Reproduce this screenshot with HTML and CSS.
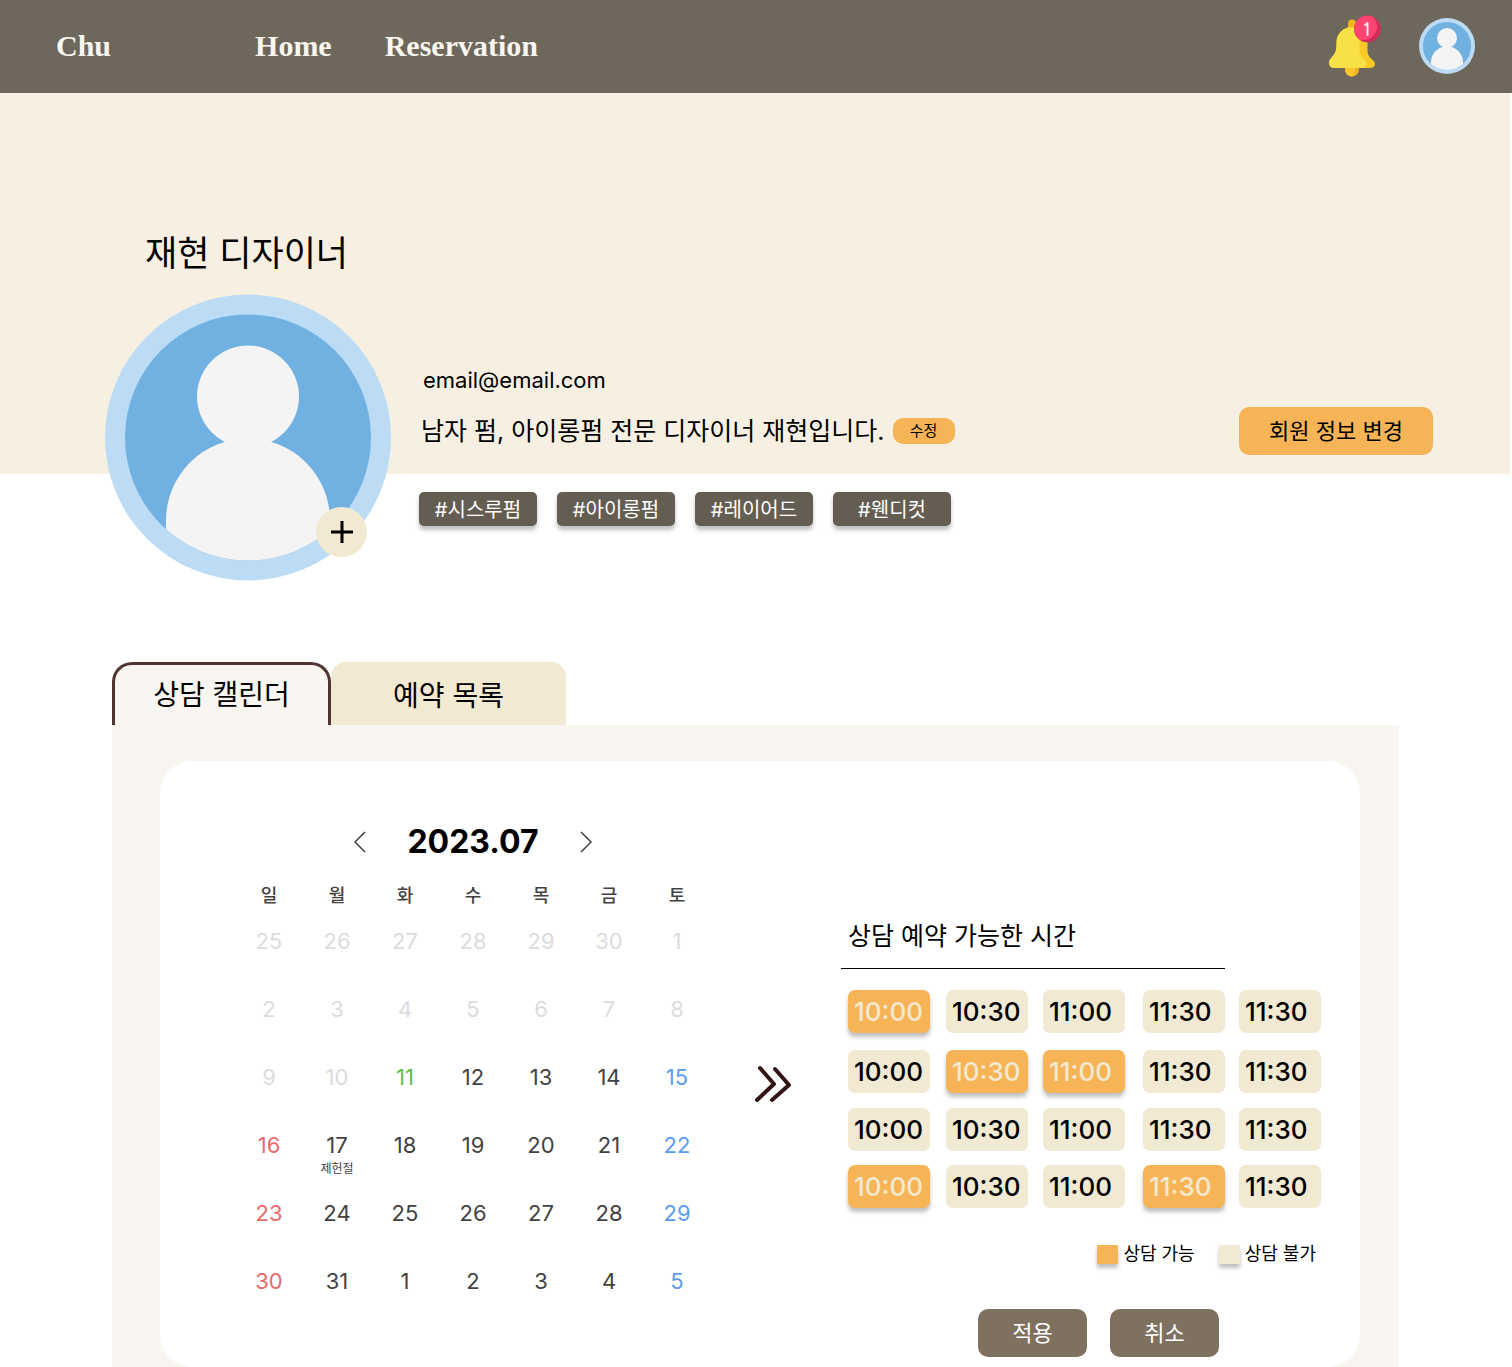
FILE: index.html
```html
<!DOCTYPE html>
<html lang="ko">
<head>
<meta charset="utf-8">
<meta name="viewport" content="width=device-width, initial-scale=1">
<title>Chu</title>
<link rel="stylesheet" href="styles.css">
</head>
<body>
<svg class="defs" aria-hidden="true">
  <defs>
    <clipPath id="face"><circle cx="143" cy="143" r="123"/></clipPath>
    <clipPath id="badge"><circle cx="39.500" cy="14" r="13.500"/></clipPath>
    <symbol id="avatar" viewBox="0 0 286 286">
      <circle cx="143" cy="143" r="143" fill="#bbdcf4"/>
      <circle cx="143" cy="143" r="123" fill="#70b1e2"/>
      <g clip-path="url(#face)" fill="#f4f4f4">
        <circle cx="143" cy="102" r="51"/>
        <path d="M61 286V226a82 82 0 0 1 164 0V286z"/>
      </g>
    </symbol>
  </defs>
</svg>

<header class="topbar">
  <a class="logo" href="#">Chu</a>
  <nav class="menu">
    <a href="#">Home</a>
    <a href="#">Reservation</a>
  </nav>
  <div class="account">
    <button class="icon-button" type="button" aria-label="알림">
      <svg class="bell" viewBox="0 0 54 62">
        <path d="M20 14V8.500a4 4 0 0 1 8 0V14z" fill="#f4b41f"/>
        <path d="M17 51h14v3.500a7 7 0 0 1-14 0z" fill="#f4b01e"/>
        <path d="M17 51h10v5q-1 4-3 5.500a7 7 0 0 1-7-7z" fill="#fbc62c"/>
        <path d="M24 12a15.500 15.500 0 0 1 15.500 15.500V36q0 4.500 4 8 3.500 3 3.500 4.500 0 4.500-5.500 4.500H7q-6 0-6-5.500 0-2.500 3-5.500 4.500-4.500 4.500-11V27.500A15.500 15.500 0 0 1 24 12z" fill="#f9c928"/>
        <path d="M24 12q7.500 3.500 7.500 15v9q0 4 3.500 7t3.500 5.500q0 4.500-5 4.500H7q-6 0-6-5.500 0-2.500 3-5.500 4.500-4.500 4.500-11V27.500A15.500 15.500 0 0 1 24 12z" fill="#f8e146"/>
        <g clip-path="url(#badge)">
          <circle cx="39.500" cy="14" r="13.500" fill="#cf2b5b"/>
          <circle cx="35.500" cy="11.500" r="13.500" fill="#ff4470"/>
        </g>
        <path d="M37 10l2.500-2v12" fill="none" stroke="#f4e8f0" stroke-width="2" stroke-linecap="round" stroke-linejoin="round"/>
      </svg>
    </button>
    <button class="icon-button" type="button" aria-label="내 계정">
      <svg class="account-avatar"><use href="#avatar"/></svg>
    </button>
  </div>
</header>

<main>
  <section class="profile">
    <h1 class="name">재현 디자이너</h1>
    <div class="profile-row">
      <div class="photo">
        <svg class="photo-image"><use href="#avatar"/></svg>
        <button class="photo-add" type="button" aria-label="사진 추가">
          <svg viewBox="0 0 24 24"><path d="M12 1v22M1 12h22" stroke="#000" stroke-width="3"/></svg>
        </button>
      </div>
      <div class="info">
        <p class="email">email@email.com</p>
        <div class="bio">
          <p>남자 펌, 아이롱펌 전문 디자이너 재현입니다.</p>
          <button class="bio-edit" type="button">수정</button>
        </div>
        <ul class="tags">
          <li>#시스루펌</li>
          <li>#아이롱펌</li>
          <li>#레이어드</li>
          <li>#웬디컷</li>
        </ul>
      </div>
      <button class="account-edit" type="button">회원 정보 변경</button>
    </div>
  </section>

  <section class="schedule">
    <div class="tabs" role="tablist">
      <button class="tab tab-active" type="button" role="tab" aria-selected="true">상담 캘린더</button>
      <button class="tab" type="button" role="tab" aria-selected="false">예약 목록</button>
    </div>
    <div class="panel" role="tabpanel">
      <div class="card">
        <div class="calendar">
          <div class="month">
            <button class="icon-button" type="button" aria-label="이전 달">
              <svg class="chevron" viewBox="0 0 14 22"><path d="M12 1L2 11l10 10"/></svg>
            </button>
            <h2>2023.07</h2>
            <button class="icon-button" type="button" aria-label="다음 달">
              <svg class="chevron" viewBox="0 0 14 22"><path d="M2 1l10 10L2 21"/></svg>
            </button>
          </div>
          <table class="days">
            <thead>
              <tr><th>일</th><th>월</th><th>화</th><th>수</th><th>목</th><th>금</th><th>토</th></tr>
            </thead>
            <tbody>
              <tr class="past"><td>25</td><td>26</td><td>27</td><td>28</td><td>29</td><td>30</td><td>1</td></tr>
              <tr class="past"><td>2</td><td>3</td><td>4</td><td>5</td><td>6</td><td>7</td><td>8</td></tr>
              <tr><td class="past-day">9</td><td class="past-day">10</td><td class="today">11</td><td>12</td><td>13</td><td>14</td><td>15</td></tr>
              <tr><td>16</td><td>17<span class="holiday">제헌절</span></td><td>18</td><td>19</td><td>20</td><td>21</td><td>22</td></tr>
              <tr><td>23</td><td>24</td><td>25</td><td>26</td><td>27</td><td>28</td><td>29</td></tr>
              <tr><td>30</td><td>31</td><td>1</td><td>2</td><td>3</td><td>4</td><td>5</td></tr>
            </tbody>
          </table>
        </div>

        <svg class="forward" viewBox="0 0 42 38" aria-hidden="true">
          <path d="M5 3l14 16L2 35M20 4l14 16L17 35"/>
        </svg>

        <div class="times">
          <h2 class="times-title">상담 예약 가능한 시간</h2>
          <div class="slots">
            <button type="button" aria-pressed="true">10:00</button>
            <button type="button" aria-pressed="false">10:30</button>
            <button type="button" aria-pressed="false">11:00</button>
            <button type="button" aria-pressed="false">11:30</button>
            <button type="button" aria-pressed="false">11:30</button>
            <button type="button" aria-pressed="false">10:00</button>
            <button type="button" aria-pressed="true">10:30</button>
            <button type="button" aria-pressed="true">11:00</button>
            <button type="button" aria-pressed="false">11:30</button>
            <button type="button" aria-pressed="false">11:30</button>
            <button type="button" aria-pressed="false">10:00</button>
            <button type="button" aria-pressed="false">10:30</button>
            <button type="button" aria-pressed="false">11:00</button>
            <button type="button" aria-pressed="false">11:30</button>
            <button type="button" aria-pressed="false">11:30</button>
            <button type="button" aria-pressed="true">10:00</button>
            <button type="button" aria-pressed="false">10:30</button>
            <button type="button" aria-pressed="false">11:00</button>
            <button type="button" aria-pressed="true">11:30</button>
            <button type="button" aria-pressed="false">11:30</button>
          </div>
          <ul class="legend">
            <li><span class="swatch swatch-open"></span>상담 가능</li>
            <li><span class="swatch"></span>상담 불가</li>
          </ul>
          <div class="actions">
            <button type="button">적용</button>
            <button type="button">취소</button>
          </div>
        </div>
      </div>
    </div>
  </section>
</main>
</body>
</html>
```
FILE: styles.css
```css
* {
  box-sizing: border-box;
}

body,
h1,
h2,
p,
ul {
  margin: 0;
  padding: 0;
}

body {
  background: #fff;
  color: #000;
  font-family: Inter, "Noto Sans CJK KR", sans-serif;
}

ul {
  list-style: none;
}

button {
  padding: 0;
  border: 0;
  color: inherit;
  font: inherit;
  cursor: pointer;
}

svg {
  display: block;
}

.defs {
  position: absolute;
  width: 0;
  height: 0;
}

.icon-button {
  background: none;
}

/* Top bar */
.topbar {
  display: flex;
  align-items: center;
  height: 93px;
  padding: 0 37px 2px 56px;
  background: #6e675b;
  font: bold 30px/40px "Liberation Serif", serif;
}

.topbar a {
  color: #faf6f1;
  text-decoration: none;
}

.menu {
  display: flex;
  gap: 53px;
  margin-left: 144px;
}

.account {
  display: flex;
  align-items: center;
  gap: 37px;
  margin-left: auto;
}

.bell {
  width: 54px;
  height: 62px;
}

.account-avatar {
  width: 56px;
  height: 56px;
}

/* Profile */
.profile {
  padding: 135px 79px 0 105px;
  background: linear-gradient(#f7f0e2, #f7f0e2) no-repeat 0 0 / calc(100% - 2px) 381px;
}

.name {
  margin: 0 0 16px 40px;
  font-size: 35px;
  font-weight: 400;
  line-height: 50px;
}

.profile-row {
  display: flex;
  align-items: flex-start;
}

.photo {
  position: relative;
  flex: none;
}

.photo-image {
  width: 286px;
  height: 287px;
}

.photo-add {
  position: absolute;
  right: 24px;
  bottom: 24px;
  display: grid;
  place-items: center;
  width: 51px;
  height: 50px;
  border-radius: 50%;
  background: #f2e9d2;
}

.photo-add svg {
  width: 24px;
  height: 24px;
}

.info {
  padding: 71px 0 0 28px;
}

.email {
  padding-left: 4px;
  font-size: 22px;
  line-height: 30px;
}

.bio {
  display: flex;
  align-items: center;
  gap: 8px;
  margin-top: 18px;
  padding-left: 2px;
  font-size: 25px;
  line-height: 36px;
}

.bio-edit {
  width: 62px;
  height: 26px;
  border-radius: 10px;
  background: #f7b457;
  font-size: 15px;
  line-height: 26px;
}

.tags {
  display: flex;
  gap: 20px;
  margin-top: 43px;
}

.tags li {
  width: 118px;
  height: 34px;
  border-radius: 5px;
  background: #645d51;
  box-shadow: 0 4px 4px rgba(0, 0, 0, 0.25);
  color: #fff;
  font-size: 20px;
  line-height: 36px;
  text-align: center;
}

.account-edit {
  width: 194px;
  height: 48px;
  margin: 113px 0 0 auto;
  border-radius: 10px;
  background: #f7b457;
  font-size: 22px;
  line-height: 48px;
}

/* Tabs */
.schedule {
  padding: 81px 113px 0 112px;
}

.tabs {
  display: flex;
}

.tab {
  width: 235px;
  height: 63px;
  padding-top: 4px;
  border-radius: 15px 15px 0 0;
  background: #f2e9d2;
  font-size: 28px;
  line-height: 60px;
}

.tab-active {
  width: 219px;
  padding-top: 0;
  border: 3px solid #503432;
  border-bottom: 0;
  border-radius: 20px 20px 0 0;
  background: #f9f5f0;
}

.panel {
  padding: 36px 39px 0 48px;
  background: #f9f5f0;
}

.card {
  display: flex;
  align-items: flex-start;
  justify-content: space-between;
  padding: 0 40px 10px 75px;
  border-radius: 32px;
  background: #fff;
}

/* Calendar */
.month {
  display: flex;
  align-items: center;
  justify-content: center;
  gap: 40px;
  margin: 61px 0 10px;
}

.month h2 {
  font-size: 32px;
  line-height: 40px;
}

.chevron {
  width: 14px;
  height: 22px;
  fill: none;
  stroke: #424242;
  stroke-width: 1.5;
}

.days {
  border-collapse: collapse;
  table-layout: fixed;
  width: 476px;
  color: #424242;
  text-align: center;
}

.days th {
  height: 46px;
  padding: 0 0 2px;
  font-size: 18px;
  font-weight: 500;
}

.days td {
  height: 68px;
  padding: 8px 0 0;
  font-size: 22px;
  line-height: 30px;
  vertical-align: top;
}

.days td:first-child {
  color: #e86b6b;
}

.days td:last-child {
  color: #5b9cf0;
}

.days .past td,
.days .past-day:nth-child(n) {
  color: #dcdcdc;
}

.days .today {
  color: #5cbf47;
}

.holiday {
  display: block;
  font-size: 12px;
  line-height: 18px;
}

.forward {
  width: 42px;
  height: 38px;
  margin-top: 304px;
  fill: none;
  stroke: #321414;
  stroke-width: 4;
  stroke-linecap: round;
  stroke-linejoin: round;
}

/* Consultation times */
.times {
  width: 479px;
  padding-top: 157px;
}

.times-title {
  width: 384px;
  padding: 0 7px 14px;
  border-bottom: 1px solid #000;
  font-size: 25px;
  font-weight: 400;
  line-height: 36px;
}

.slots {
  display: grid;
  grid-template-columns: 98px 97px 100px 96px 81px;
  grid-template-rows: 60px 58px 57px 43px;
  margin: 21px 0 0 7px;
}

.slots button {
  width: 82px;
  height: 43px;
  padding-left: 6px;
  border-radius: 7px;
  background: #f2e9d2;
  font-size: 26px;
  font-weight: 500;
  text-align: left;
}

.slots button[aria-pressed="true"] {
  background: #f7b457;
  box-shadow: 0 4px 4px rgba(0, 0, 0, 0.25);
  color: #f2e9d2;
}

.legend {
  display: flex;
  justify-content: flex-end;
  gap: 24px;
  margin: 34px 4px 0 0;
  font-size: 18px;
  line-height: 24px;
}

.legend li {
  display: flex;
  align-items: center;
  gap: 5px;
}

.swatch {
  width: 21px;
  height: 19px;
  background: #f2e9d2;
  box-shadow: 0 4px 4px rgba(0, 0, 0, 0.25);
}

.swatch-open {
  background: #f7b457;
}

.actions {
  display: flex;
  justify-content: flex-end;
  gap: 23px;
  margin: 43px 101px 0 0;
}

.actions button {
  width: 109px;
  height: 48px;
  border-radius: 10px;
  background: #7e7160;
  color: #fff;
  font-size: 22px;
  line-height: 48px;
}
```
